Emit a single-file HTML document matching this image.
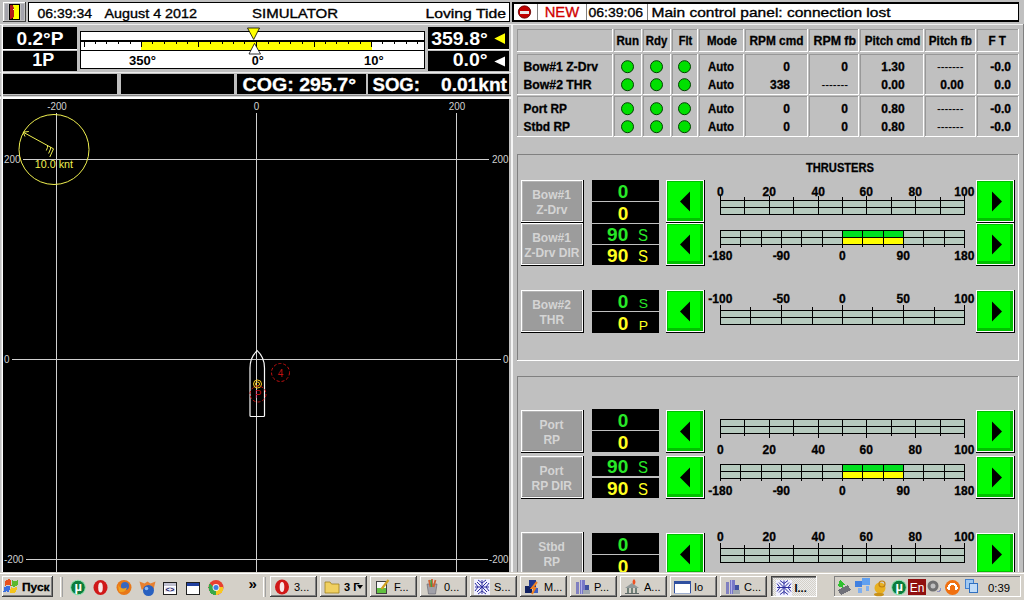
<!DOCTYPE html>
<html lang="en"><head><meta charset="utf-8"><title>DP Simulator - Loving Tide</title>
<style>
html,body{margin:0;padding:0;background:#c0c0c0;overflow:hidden}
svg{display:block;font-family:"Liberation Sans",sans-serif}
svg rect,svg line,svg polygon,svg path{shape-rendering:crispEdges}
svg .aa{shape-rendering:geometricPrecision}
text{white-space:pre}
.hv{stroke:#000;stroke-width:0.35px}
.hb{stroke:#000;stroke-width:0.3px}
.hw{stroke:#fff;stroke-width:0.3px}
</style></head><body>
<svg width="1024" height="600" viewBox="0 0 1024 600">
<rect x="0" y="0" width="1024" height="600" fill="#c0c0c0" />
<rect x="3" y="2" width="23" height="20" fill="#c0c0c0" />
<rect x="3" y="2" width="23" height="1" fill="#ffffff" />
<rect x="3" y="2" width="1" height="20" fill="#ffffff" />
<rect x="3" y="21" width="23" height="1" fill="#404040" />
<rect x="25" y="2" width="1" height="20" fill="#404040" />
<rect x="5" y="4" width="3" height="16" fill="#a4a4ac" />
<rect x="21" y="4" width="3" height="16" fill="#a4a4ac" />
<rect x="9" y="4" width="11" height="16" fill="#000000" />
<rect x="13" y="5" width="6" height="14" fill="#ffff00" />
<polygon class="aa" points="10,5 12.5,5 14,8 14,17 11,19 10,19" fill="#b01818"/>
<rect x="13" y="9" width="1" height="1" fill="#f0e0e0" />
<rect x="28" y="2" width="482" height="20" fill="#000000" />
<rect x="29" y="3" width="480" height="18" fill="#ffffff" />
<text x="37.5" y="17.6" font-size="13.5" fill="#000" textLength="54.5" lengthAdjust="spacingAndGlyphs" class="hv" >06:39:34</text>
<text x="104.5" y="17.6" font-size="13.5" fill="#000" textLength="92.5" lengthAdjust="spacingAndGlyphs" class="hv" >August 4 2012</text>
<text x="252" y="17.6" font-size="13.5" fill="#000" textLength="86" lengthAdjust="spacingAndGlyphs" class="hv" >SIMULATOR</text>
<text x="425.5" y="17.6" font-size="13.5" fill="#000" textLength="80.5" lengthAdjust="spacingAndGlyphs" class="hv" >Loving Tide</text>
<rect x="0" y="24" width="1024" height="1" fill="#f0f0f0" />
<rect x="3" y="27" width="74" height="22" fill="#000000" />
<rect x="3" y="51" width="74" height="20" fill="#000000" />
<rect x="3" y="49" width="74" height="1" fill="#ffffff" />
<rect x="428" y="49" width="81" height="1" fill="#ffffff" />
<rect x="0" y="72" width="511" height="1" fill="#ececec" />
<text x="40" y="45.3" font-size="19" font-weight="bold" fill="#ffffff" text-anchor="middle" textLength="47" lengthAdjust="spacingAndGlyphs" >0.2°P</text>
<text x="43.2" y="66.4" font-size="18" font-weight="bold" fill="#ffffff" text-anchor="middle" textLength="22" lengthAdjust="spacingAndGlyphs" >1P</text>
<rect x="428" y="27" width="81" height="22" fill="#000000" />
<rect x="428" y="51" width="81" height="20" fill="#000000" />
<text x="431.2" y="45.3" font-size="19" font-weight="bold" fill="#ffffff" textLength="56.6" lengthAdjust="spacingAndGlyphs" >359.8°</text>
<text x="452.7" y="66.4" font-size="18" font-weight="bold" fill="#ffffff" textLength="35" lengthAdjust="spacingAndGlyphs" >0.0°</text>
<polygon class="aa" points="494.3,38.6 505,33.2 505,44" fill="#ffff00"/>
<polygon class="aa" points="494.3,61.5 505,56.6 505,66.4" fill="#ffffff"/>
<rect x="80" y="31" width="345" height="38" fill="#000000" />
<rect x="81" y="32" width="343" height="18" fill="#ffffff" />
<rect x="81" y="51" width="343" height="17" fill="#ffffff" />
<rect x="141" y="42" width="231" height="8" fill="#ffff00" />
<rect x="81" y="40" width="343" height="2" fill="#000000" />
<rect x="84" y="41" width="1" height="6" fill="#000000" />
<rect x="95" y="41" width="1" height="3" fill="#000000" />
<rect x="106" y="41" width="1" height="3" fill="#000000" />
<rect x="118" y="41" width="1" height="3" fill="#000000" />
<rect x="130" y="41" width="1" height="3" fill="#000000" />
<rect x="141" y="41" width="1" height="6" fill="#000000" />
<rect x="152" y="41" width="1" height="3" fill="#000000" />
<rect x="164" y="41" width="1" height="3" fill="#000000" />
<rect x="176" y="41" width="1" height="3" fill="#000000" />
<rect x="187" y="41" width="1" height="3" fill="#000000" />
<rect x="198" y="41" width="1" height="6" fill="#000000" />
<rect x="210" y="41" width="1" height="3" fill="#000000" />
<rect x="222" y="41" width="1" height="3" fill="#000000" />
<rect x="233" y="41" width="1" height="3" fill="#000000" />
<rect x="244" y="41" width="1" height="3" fill="#000000" />
<rect x="256" y="41" width="1" height="6" fill="#000000" />
<rect x="268" y="41" width="1" height="3" fill="#000000" />
<rect x="279" y="41" width="1" height="3" fill="#000000" />
<rect x="290" y="41" width="1" height="3" fill="#000000" />
<rect x="302" y="41" width="1" height="3" fill="#000000" />
<rect x="314" y="41" width="1" height="6" fill="#000000" />
<rect x="325" y="41" width="1" height="3" fill="#000000" />
<rect x="336" y="41" width="1" height="3" fill="#000000" />
<rect x="348" y="41" width="1" height="3" fill="#000000" />
<rect x="360" y="41" width="1" height="3" fill="#000000" />
<rect x="371" y="41" width="1" height="6" fill="#000000" />
<rect x="382" y="41" width="1" height="3" fill="#000000" />
<rect x="394" y="41" width="1" height="3" fill="#000000" />
<rect x="406" y="41" width="1" height="3" fill="#000000" />
<rect x="417" y="41" width="1" height="3" fill="#000000" />
<text x="129" y="64.5" font-size="13" font-weight="bold" fill="#000000" textLength="27" lengthAdjust="spacingAndGlyphs" >350°</text>
<text x="251.8" y="64.5" font-size="13" font-weight="bold" fill="#000000" textLength="12" lengthAdjust="spacingAndGlyphs" >0°</text>
<text x="364" y="64.5" font-size="13" font-weight="bold" fill="#000000" textLength="19.6" lengthAdjust="spacingAndGlyphs" >10°</text>
<polygon class="aa" points="247.5,28 259.5,28 253.7,39.5" fill="#ffff00" stroke="#000" stroke-width="0.8"/>
<polygon class="aa" points="249,54 260.5,54 254.5,43.4" fill="#ffffff" stroke="#000" stroke-width="0.8"/>
<rect x="3" y="74" width="114" height="20" fill="#000000" />
<rect x="121" y="74" width="113" height="20" fill="#000000" />
<rect x="237" y="74" width="129" height="20" fill="#000000" />
<rect x="368" y="74" width="141" height="20" fill="#000000" />
<text x="242.6" y="90.8" font-size="19" font-weight="bold" fill="#ffffff" textLength="113.5" lengthAdjust="spacingAndGlyphs" class="hw" >COG: 295.7°</text>
<text x="372.5" y="90.8" font-size="19" font-weight="bold" fill="#ffffff" textLength="47.5" lengthAdjust="spacingAndGlyphs" class="hw" >SOG:</text>
<text x="441" y="90.8" font-size="19" font-weight="bold" fill="#ffffff" textLength="66" lengthAdjust="spacingAndGlyphs" class="hw" >0.01knt</text>
<rect x="0" y="95" width="511" height="1" fill="#888888" />
<rect x="0" y="96" width="511" height="1" fill="#d8d8d8" />
<rect x="0" y="97" width="511" height="2" fill="#ffffff" />
<rect x="1" y="25" width="1" height="547" fill="#d8d8d8" />
<rect x="2" y="25" width="1" height="547" fill="#ffffff" />
<rect x="3" y="99" width="506" height="473" fill="#000000" />
<rect x="511" y="24" width="1.5" height="548" fill="#f4f4f4" />
<rect x="56" y="113" width="1" height="459" fill="#d0d0d0" />
<rect x="256" y="113" width="1" height="459" fill="#d0d0d0" />
<rect x="456" y="113" width="1" height="459" fill="#d0d0d0" />
<rect x="23" y="159" width="466" height="1" fill="#d0d0d0" />
<rect x="12" y="359" width="489" height="1" fill="#d0d0d0" />
<rect x="26" y="559" width="462" height="1" fill="#d0d0d0" />
<text x="57" y="109.8" font-size="10.5" fill="#d0d0d0" text-anchor="middle" textLength="19.5" lengthAdjust="spacingAndGlyphs" >-200</text>
<text x="256.5" y="109.8" font-size="10.5" fill="#d0d0d0" text-anchor="middle" textLength="5.5" lengthAdjust="spacingAndGlyphs" >0</text>
<text x="457" y="109.8" font-size="10.5" fill="#d0d0d0" text-anchor="middle" textLength="16.5" lengthAdjust="spacingAndGlyphs" >200</text>
<text x="4" y="163.2" font-size="10.5" fill="#d0d0d0" textLength="16.5" lengthAdjust="spacingAndGlyphs" >200</text>
<text x="508.5" y="163.2" font-size="10.5" fill="#d0d0d0" text-anchor="end" textLength="16.5" lengthAdjust="spacingAndGlyphs" >200</text>
<text x="4" y="363.2" font-size="10.5" fill="#d0d0d0" textLength="5.5" lengthAdjust="spacingAndGlyphs" >0</text>
<text x="508.5" y="363.2" font-size="10.5" fill="#d0d0d0" text-anchor="end" textLength="5.5" lengthAdjust="spacingAndGlyphs" >0</text>
<text x="4" y="563.2" font-size="10.5" fill="#d0d0d0" textLength="19.5" lengthAdjust="spacingAndGlyphs" >-200</text>
<text x="508.5" y="563.2" font-size="10.5" fill="#d0d0d0" text-anchor="end" textLength="19.5" lengthAdjust="spacingAndGlyphs" >-200</text>
<circle class="aa" cx="54" cy="149.5" r="35" fill="none" stroke="#f0f050" stroke-width="1"/>
<path class="aa" d="M23.2 132.2 L53.5 148.8 M23.2 132.2 L28.8 131.5 M23.2 132.2 L25 136.5 M53.5 148.8 L49.8 157 M50.5 147.2 L50.5 149 L48.6 153.5 M47.5 145.6 L47.5 147.4 L46.3 150.5" fill="none" stroke="#f0f050" stroke-width="1"/>
<text x="34.8" y="167.5" font-size="10.5" fill="#f0f050" textLength="38.2" lengthAdjust="spacingAndGlyphs" >10.0 knt</text>
<path class="aa" d="M250 415.5 L250 368 C250 360 253 354.5 257.2 350.6 C261.5 354.5 264.5 360 264.5 368 L264.5 415.5 Q264.5 416.5 263.5 416.5 L251 416.5 Q250 416.5 250 415.5 Z" fill="none" stroke="#f8f8f8" stroke-width="1.2"/>
<circle class="aa" cx="257.5" cy="384" r="4" fill="none" stroke="#ffd020" stroke-width="1"/>
<circle class="aa" cx="257.5" cy="384" r="2" fill="none" stroke="#ffd020" stroke-width="1"/>
<circle class="aa" cx="258" cy="394" r="8" fill="none" stroke="#c01010" stroke-width="1" stroke-dasharray="3 2"/>
<text x="258" y="398" font-size="10" fill="#c01010" text-anchor="middle" >P</text>
<circle class="aa" cx="280.5" cy="372.5" r="9" fill="none" stroke="#c01010" stroke-width="1" stroke-dasharray="3 2"/>
<text x="280.5" y="376.5" font-size="10" fill="#c01010" text-anchor="middle" >4</text>
<rect x="512" y="2" width="507" height="20" fill="#000000" />
<rect x="514" y="4" width="504" height="16" fill="#ffffff" />
<rect x="537" y="4" width="1" height="16" fill="#808080" />
<rect x="586" y="4" width="1" height="16" fill="#808080" />
<rect x="647" y="4" width="1" height="16" fill="#808080" />
<circle class="aa" cx="524.5" cy="12" r="6.2" fill="#c00000" stroke="#600000" stroke-width="0.8"/>
<rect x="520" y="11" width="9" height="3" fill="#e8e8e8" />
<text x="544.7" y="16.6" font-size="14" fill="#d00000" textLength="34.5" lengthAdjust="spacingAndGlyphs" stroke="#d00000" stroke-width="0.3">NEW</text>
<text x="588.5" y="16.8" font-size="13.5" fill="#000" textLength="54.5" lengthAdjust="spacingAndGlyphs" class="hv" >06:39:06</text>
<text x="651.5" y="16.8" font-size="13.5" fill="#000" textLength="239" lengthAdjust="spacingAndGlyphs" class="hv" >Main control panel: connection lost</text>
<rect x="517" y="29" width="96" height="1" fill="#989898" />
<rect x="517" y="29" width="1" height="23" fill="#989898" />
<rect x="517" y="51" width="96" height="1" fill="#ffffff" />
<rect x="612" y="29" width="1" height="23" fill="#ffffff" />
<rect x="614" y="29" width="28" height="1" fill="#989898" />
<rect x="614" y="29" width="1" height="23" fill="#989898" />
<rect x="614" y="51" width="28" height="1" fill="#ffffff" />
<rect x="641" y="29" width="1" height="23" fill="#ffffff" />
<rect x="643" y="29" width="28" height="1" fill="#989898" />
<rect x="643" y="29" width="1" height="23" fill="#989898" />
<rect x="643" y="51" width="28" height="1" fill="#ffffff" />
<rect x="670" y="29" width="1" height="23" fill="#ffffff" />
<rect x="672" y="29" width="26" height="1" fill="#989898" />
<rect x="672" y="29" width="1" height="23" fill="#989898" />
<rect x="672" y="51" width="26" height="1" fill="#ffffff" />
<rect x="697" y="29" width="1" height="23" fill="#ffffff" />
<rect x="699" y="29" width="45" height="1" fill="#989898" />
<rect x="699" y="29" width="1" height="23" fill="#989898" />
<rect x="699" y="51" width="45" height="1" fill="#ffffff" />
<rect x="743" y="29" width="1" height="23" fill="#ffffff" />
<rect x="745" y="29" width="63" height="1" fill="#989898" />
<rect x="745" y="29" width="1" height="23" fill="#989898" />
<rect x="745" y="51" width="63" height="1" fill="#ffffff" />
<rect x="807" y="29" width="1" height="23" fill="#ffffff" />
<rect x="809" y="29" width="50" height="1" fill="#989898" />
<rect x="809" y="29" width="1" height="23" fill="#989898" />
<rect x="809" y="51" width="50" height="1" fill="#ffffff" />
<rect x="858" y="29" width="1" height="23" fill="#ffffff" />
<rect x="860" y="29" width="64" height="1" fill="#989898" />
<rect x="860" y="29" width="1" height="23" fill="#989898" />
<rect x="860" y="51" width="64" height="1" fill="#ffffff" />
<rect x="923" y="29" width="1" height="23" fill="#ffffff" />
<rect x="925" y="29" width="51" height="1" fill="#989898" />
<rect x="925" y="29" width="1" height="23" fill="#989898" />
<rect x="925" y="51" width="51" height="1" fill="#ffffff" />
<rect x="975" y="29" width="1" height="23" fill="#ffffff" />
<rect x="977" y="29" width="42" height="1" fill="#989898" />
<rect x="977" y="29" width="1" height="23" fill="#989898" />
<rect x="977" y="51" width="42" height="1" fill="#ffffff" />
<rect x="1018" y="29" width="1" height="23" fill="#ffffff" />
<rect x="517" y="54" width="96" height="1" fill="#989898" />
<rect x="517" y="54" width="1" height="41" fill="#989898" />
<rect x="517" y="94" width="96" height="1" fill="#ffffff" />
<rect x="612" y="54" width="1" height="41" fill="#ffffff" />
<rect x="614" y="54" width="28" height="1" fill="#989898" />
<rect x="614" y="54" width="1" height="41" fill="#989898" />
<rect x="614" y="94" width="28" height="1" fill="#ffffff" />
<rect x="641" y="54" width="1" height="41" fill="#ffffff" />
<rect x="643" y="54" width="28" height="1" fill="#989898" />
<rect x="643" y="54" width="1" height="41" fill="#989898" />
<rect x="643" y="94" width="28" height="1" fill="#ffffff" />
<rect x="670" y="54" width="1" height="41" fill="#ffffff" />
<rect x="672" y="54" width="26" height="1" fill="#989898" />
<rect x="672" y="54" width="1" height="41" fill="#989898" />
<rect x="672" y="94" width="26" height="1" fill="#ffffff" />
<rect x="697" y="54" width="1" height="41" fill="#ffffff" />
<rect x="699" y="54" width="45" height="1" fill="#989898" />
<rect x="699" y="54" width="1" height="41" fill="#989898" />
<rect x="699" y="94" width="45" height="1" fill="#ffffff" />
<rect x="743" y="54" width="1" height="41" fill="#ffffff" />
<rect x="745" y="54" width="63" height="1" fill="#989898" />
<rect x="745" y="54" width="1" height="41" fill="#989898" />
<rect x="745" y="94" width="63" height="1" fill="#ffffff" />
<rect x="807" y="54" width="1" height="41" fill="#ffffff" />
<rect x="809" y="54" width="50" height="1" fill="#989898" />
<rect x="809" y="54" width="1" height="41" fill="#989898" />
<rect x="809" y="94" width="50" height="1" fill="#ffffff" />
<rect x="858" y="54" width="1" height="41" fill="#ffffff" />
<rect x="860" y="54" width="64" height="1" fill="#989898" />
<rect x="860" y="54" width="1" height="41" fill="#989898" />
<rect x="860" y="94" width="64" height="1" fill="#ffffff" />
<rect x="923" y="54" width="1" height="41" fill="#ffffff" />
<rect x="925" y="54" width="51" height="1" fill="#989898" />
<rect x="925" y="54" width="1" height="41" fill="#989898" />
<rect x="925" y="94" width="51" height="1" fill="#ffffff" />
<rect x="975" y="54" width="1" height="41" fill="#ffffff" />
<rect x="977" y="54" width="42" height="1" fill="#989898" />
<rect x="977" y="54" width="1" height="41" fill="#989898" />
<rect x="977" y="94" width="42" height="1" fill="#ffffff" />
<rect x="1018" y="54" width="1" height="41" fill="#ffffff" />
<rect x="517" y="96" width="96" height="1" fill="#989898" />
<rect x="517" y="96" width="1" height="41" fill="#989898" />
<rect x="517" y="136" width="96" height="1" fill="#ffffff" />
<rect x="612" y="96" width="1" height="41" fill="#ffffff" />
<rect x="614" y="96" width="28" height="1" fill="#989898" />
<rect x="614" y="96" width="1" height="41" fill="#989898" />
<rect x="614" y="136" width="28" height="1" fill="#ffffff" />
<rect x="641" y="96" width="1" height="41" fill="#ffffff" />
<rect x="643" y="96" width="28" height="1" fill="#989898" />
<rect x="643" y="96" width="1" height="41" fill="#989898" />
<rect x="643" y="136" width="28" height="1" fill="#ffffff" />
<rect x="670" y="96" width="1" height="41" fill="#ffffff" />
<rect x="672" y="96" width="26" height="1" fill="#989898" />
<rect x="672" y="96" width="1" height="41" fill="#989898" />
<rect x="672" y="136" width="26" height="1" fill="#ffffff" />
<rect x="697" y="96" width="1" height="41" fill="#ffffff" />
<rect x="699" y="96" width="45" height="1" fill="#989898" />
<rect x="699" y="96" width="1" height="41" fill="#989898" />
<rect x="699" y="136" width="45" height="1" fill="#ffffff" />
<rect x="743" y="96" width="1" height="41" fill="#ffffff" />
<rect x="745" y="96" width="63" height="1" fill="#989898" />
<rect x="745" y="96" width="1" height="41" fill="#989898" />
<rect x="745" y="136" width="63" height="1" fill="#ffffff" />
<rect x="807" y="96" width="1" height="41" fill="#ffffff" />
<rect x="809" y="96" width="50" height="1" fill="#989898" />
<rect x="809" y="96" width="1" height="41" fill="#989898" />
<rect x="809" y="136" width="50" height="1" fill="#ffffff" />
<rect x="858" y="96" width="1" height="41" fill="#ffffff" />
<rect x="860" y="96" width="64" height="1" fill="#989898" />
<rect x="860" y="96" width="1" height="41" fill="#989898" />
<rect x="860" y="136" width="64" height="1" fill="#ffffff" />
<rect x="923" y="96" width="1" height="41" fill="#ffffff" />
<rect x="925" y="96" width="51" height="1" fill="#989898" />
<rect x="925" y="96" width="1" height="41" fill="#989898" />
<rect x="925" y="136" width="51" height="1" fill="#ffffff" />
<rect x="975" y="96" width="1" height="41" fill="#ffffff" />
<rect x="977" y="96" width="42" height="1" fill="#989898" />
<rect x="977" y="96" width="1" height="41" fill="#989898" />
<rect x="977" y="136" width="42" height="1" fill="#ffffff" />
<rect x="1018" y="96" width="1" height="41" fill="#ffffff" />
<text x="616.5" y="45" font-size="12" font-weight="bold" fill="#000000" textLength="22.5" lengthAdjust="spacingAndGlyphs" class="hb" >Run</text>
<text x="645.8" y="45" font-size="12" font-weight="bold" fill="#000000" textLength="21.5" lengthAdjust="spacingAndGlyphs" class="hb" >Rdy</text>
<text x="678.8" y="45" font-size="12" font-weight="bold" fill="#000000" textLength="13.5" lengthAdjust="spacingAndGlyphs" class="hb" >Flt</text>
<text x="707" y="45" font-size="12" font-weight="bold" fill="#000000" textLength="30" lengthAdjust="spacingAndGlyphs" class="hb" >Mode</text>
<text x="749.5" y="45" font-size="12" font-weight="bold" fill="#000000" textLength="54" lengthAdjust="spacingAndGlyphs" class="hb" >RPM cmd</text>
<text x="813.5" y="45" font-size="12" font-weight="bold" fill="#000000" textLength="42.5" lengthAdjust="spacingAndGlyphs" class="hb" >RPM fb</text>
<text x="864.8" y="45" font-size="12" font-weight="bold" fill="#000000" textLength="55.5" lengthAdjust="spacingAndGlyphs" class="hb" >Pitch cmd</text>
<text x="928.8" y="45" font-size="12" font-weight="bold" fill="#000000" textLength="43" lengthAdjust="spacingAndGlyphs" class="hb" >Pitch fb</text>
<text x="988.5" y="45" font-size="12" font-weight="bold" fill="#000000" textLength="17.5" lengthAdjust="spacingAndGlyphs" class="hb" >F T</text>
<text x="523.5" y="71" font-size="12" font-weight="bold" fill="#000000" textLength="74.5" lengthAdjust="spacingAndGlyphs" class="hb" >Bow#1 Z-Drv</text>
<circle class="aa" cx="627.5" cy="66.7" r="6" fill="#00e000" stroke="#004000" stroke-width="1"/>
<circle class="aa" cx="656.5" cy="66.7" r="6" fill="#00e000" stroke="#004000" stroke-width="1"/>
<circle class="aa" cx="684.5" cy="66.7" r="6" fill="#00e000" stroke="#004000" stroke-width="1"/>
<text x="708" y="71" font-size="12" font-weight="bold" fill="#000000" textLength="26" lengthAdjust="spacingAndGlyphs" class="hb" >Auto</text>
<text x="790" y="71" font-size="12" font-weight="bold" fill="#000000" text-anchor="end" class="hb" >0</text>
<text x="848" y="71" font-size="12" font-weight="bold" fill="#000000" text-anchor="end" class="hb" >0</text>
<text x="893" y="71" font-size="12" font-weight="bold" fill="#000000" text-anchor="middle" class="hb" >1.30</text>
<text x="950.2" y="71" font-size="12" fill="#000000" text-anchor="middle" textLength="26.5" lengthAdjust="spacingAndGlyphs" >-------</text>
<text x="1011" y="71" font-size="12" font-weight="bold" fill="#000000" text-anchor="end" class="hb" >-0.0</text>
<text x="523.5" y="89" font-size="12" font-weight="bold" fill="#000000" textLength="68" lengthAdjust="spacingAndGlyphs" class="hb" >Bow#2 THR</text>
<circle class="aa" cx="627.5" cy="84.7" r="6" fill="#00e000" stroke="#004000" stroke-width="1"/>
<circle class="aa" cx="656.5" cy="84.7" r="6" fill="#00e000" stroke="#004000" stroke-width="1"/>
<circle class="aa" cx="684.5" cy="84.7" r="6" fill="#00e000" stroke="#004000" stroke-width="1"/>
<text x="708" y="89" font-size="12" font-weight="bold" fill="#000000" textLength="26" lengthAdjust="spacingAndGlyphs" class="hb" >Auto</text>
<text x="790" y="89" font-size="12" font-weight="bold" fill="#000000" text-anchor="end" class="hb" >338</text>
<text x="848" y="89" font-size="12" fill="#000000" text-anchor="end" textLength="26.5" lengthAdjust="spacingAndGlyphs" >-------</text>
<text x="893" y="89" font-size="12" font-weight="bold" fill="#000000" text-anchor="middle" class="hb" >0.00</text>
<text x="952" y="89" font-size="12" font-weight="bold" fill="#000000" text-anchor="middle" class="hb" >0.00</text>
<text x="1011" y="89" font-size="12" font-weight="bold" fill="#000000" text-anchor="end" class="hb" >0.0</text>
<text x="523.5" y="113" font-size="12" font-weight="bold" fill="#000000" textLength="43.5" lengthAdjust="spacingAndGlyphs" class="hb" >Port RP</text>
<circle class="aa" cx="627.5" cy="108.7" r="6" fill="#00e000" stroke="#004000" stroke-width="1"/>
<circle class="aa" cx="656.5" cy="108.7" r="6" fill="#00e000" stroke="#004000" stroke-width="1"/>
<circle class="aa" cx="684.5" cy="108.7" r="6" fill="#00e000" stroke="#004000" stroke-width="1"/>
<text x="708" y="113" font-size="12" font-weight="bold" fill="#000000" textLength="26" lengthAdjust="spacingAndGlyphs" class="hb" >Auto</text>
<text x="790" y="113" font-size="12" font-weight="bold" fill="#000000" text-anchor="end" class="hb" >0</text>
<text x="848" y="113" font-size="12" font-weight="bold" fill="#000000" text-anchor="end" class="hb" >0</text>
<text x="893" y="113" font-size="12" font-weight="bold" fill="#000000" text-anchor="middle" class="hb" >0.80</text>
<text x="950.2" y="113" font-size="12" fill="#000000" text-anchor="middle" textLength="26.5" lengthAdjust="spacingAndGlyphs" >-------</text>
<text x="1011" y="113" font-size="12" font-weight="bold" fill="#000000" text-anchor="end" class="hb" >-0.0</text>
<text x="523.5" y="131" font-size="12" font-weight="bold" fill="#000000" textLength="46.5" lengthAdjust="spacingAndGlyphs" class="hb" >Stbd RP</text>
<circle class="aa" cx="627.5" cy="126.7" r="6" fill="#00e000" stroke="#004000" stroke-width="1"/>
<circle class="aa" cx="656.5" cy="126.7" r="6" fill="#00e000" stroke="#004000" stroke-width="1"/>
<circle class="aa" cx="684.5" cy="126.7" r="6" fill="#00e000" stroke="#004000" stroke-width="1"/>
<text x="708" y="131" font-size="12" font-weight="bold" fill="#000000" textLength="26" lengthAdjust="spacingAndGlyphs" class="hb" >Auto</text>
<text x="790" y="131" font-size="12" font-weight="bold" fill="#000000" text-anchor="end" class="hb" >0</text>
<text x="848" y="131" font-size="12" font-weight="bold" fill="#000000" text-anchor="end" class="hb" >0</text>
<text x="893" y="131" font-size="12" font-weight="bold" fill="#000000" text-anchor="middle" class="hb" >0.80</text>
<text x="950.2" y="131" font-size="12" fill="#000000" text-anchor="middle" textLength="26.5" lengthAdjust="spacingAndGlyphs" >-------</text>
<text x="1011" y="131" font-size="12" font-weight="bold" fill="#000000" text-anchor="end" class="hb" >-0.0</text>
<rect x="1023" y="24" width="1" height="548" fill="#808080" />
<rect x="517" y="154" width="502" height="1" fill="#808080" />
<rect x="517" y="154" width="1" height="206" fill="#808080" />
<rect x="1018" y="154" width="1" height="206" fill="#ffffff" />
<rect x="517" y="360" width="502" height="1" fill="#ffffff" />
<rect x="517" y="376" width="502" height="1" fill="#808080" />
<rect x="517" y="376" width="1" height="196" fill="#808080" />
<rect x="1018" y="376" width="1" height="196" fill="#ffffff" />
<text x="840" y="172" font-size="12" font-weight="bold" fill="#000000" text-anchor="middle" textLength="68" lengthAdjust="spacingAndGlyphs" class="hb" >THRUSTERS</text>
<rect x="521" y="180" width="63" height="43" fill="#000000" />
<rect x="521" y="180" width="62" height="42" fill="#ffffff" />
<rect x="522" y="181" width="60" height="40" fill="#8c8c8c" />
<rect x="522" y="181" width="59" height="39" fill="#b4b4b4" />
<rect x="523" y="182" width="58" height="38" fill="#9c9c9c" />
<text x="551.5" y="198.6" font-size="12" font-weight="bold" fill="#d4d4d4" text-anchor="middle" >Bow#1</text>
<text x="551.8" y="213.6" font-size="12" font-weight="bold" fill="#d4d4d4" text-anchor="middle" >Z-Drv</text>
<rect x="592" y="180" width="67" height="21" fill="#000000" />
<text x="628.3" y="198" font-size="19" font-weight="bold" fill="#28e828" text-anchor="end" textLength="10.6" lengthAdjust="spacingAndGlyphs" >0</text>
<rect x="592" y="202" width="67" height="21" fill="#000000" />
<text x="628.3" y="220" font-size="19" font-weight="bold" fill="#ffff20" text-anchor="end" textLength="10.6" lengthAdjust="spacingAndGlyphs" >0</text>
<rect x="666" y="180" width="39" height="43" fill="#000000" />
<rect x="666" y="180" width="38" height="42" fill="#ffffff" />
<rect x="667" y="181" width="36" height="40" fill="#00c000" />
<rect x="668" y="182" width="32" height="36" fill="#00fa00" />
<polygon class="aa" points="680,201.5 690,191.5 690,211.5" fill="#000"/>
<rect x="976" y="180" width="39" height="43" fill="#000000" />
<rect x="976" y="180" width="38" height="42" fill="#ffffff" />
<rect x="977" y="181" width="36" height="40" fill="#00c000" />
<rect x="978" y="182" width="32" height="36" fill="#00fa00" />
<polygon class="aa" points="1002,201.5 992,191.5 992,211.5" fill="#000"/>
<rect x="720" y="200" width="244" height="15" fill="#b6cabe" />
<rect x="720" y="200" width="245" height="1" fill="#000000" />
<rect x="720" y="207" width="245" height="1" fill="#000000" />
<rect x="720" y="214" width="245" height="1" fill="#000000" />
<rect x="720" y="196" width="1" height="19" fill="#000000" />
<text x="720.3" y="195.5" font-size="12" font-weight="bold" fill="#000000" text-anchor="middle" class="hb" >0</text>
<rect x="744" y="197" width="1" height="18" fill="#000000" />
<rect x="769" y="196" width="1" height="19" fill="#000000" />
<text x="769.3" y="195.5" font-size="12" font-weight="bold" fill="#000000" text-anchor="middle" class="hb" >20</text>
<rect x="793" y="197" width="1" height="18" fill="#000000" />
<rect x="818" y="196" width="1" height="19" fill="#000000" />
<text x="818.3" y="195.5" font-size="12" font-weight="bold" fill="#000000" text-anchor="middle" class="hb" >40</text>
<rect x="842" y="197" width="1" height="18" fill="#000000" />
<rect x="866" y="196" width="1" height="19" fill="#000000" />
<text x="866.3" y="195.5" font-size="12" font-weight="bold" fill="#000000" text-anchor="middle" class="hb" >60</text>
<rect x="891" y="197" width="1" height="18" fill="#000000" />
<rect x="915" y="196" width="1" height="19" fill="#000000" />
<text x="915.3" y="195.5" font-size="12" font-weight="bold" fill="#000000" text-anchor="middle" class="hb" >80</text>
<rect x="940" y="197" width="1" height="18" fill="#000000" />
<rect x="964" y="196" width="1" height="19" fill="#000000" />
<text x="964.3" y="195.5" font-size="12" font-weight="bold" fill="#000000" text-anchor="middle" class="hb" >100</text>
<rect x="521" y="223" width="63" height="43" fill="#000000" />
<rect x="521" y="223" width="62" height="42" fill="#ffffff" />
<rect x="522" y="224" width="60" height="40" fill="#8c8c8c" />
<rect x="522" y="224" width="59" height="39" fill="#b4b4b4" />
<rect x="523" y="225" width="58" height="38" fill="#9c9c9c" />
<text x="551.5" y="241.6" font-size="12" font-weight="bold" fill="#d4d4d4" text-anchor="middle" >Bow#1</text>
<text x="551.8" y="256.6" font-size="12" font-weight="bold" fill="#d4d4d4" text-anchor="middle" >Z-Drv DIR</text>
<rect x="592" y="224" width="67" height="20" fill="#000000" />
<text x="628.3" y="241" font-size="19" font-weight="bold" fill="#28e828" text-anchor="end" textLength="21.2" lengthAdjust="spacingAndGlyphs" >90</text>
<text x="638" y="241" font-size="16" fill="#28e828" textLength="10" lengthAdjust="spacingAndGlyphs" >S</text>
<rect x="592" y="245" width="67" height="20" fill="#000000" />
<text x="628.3" y="262" font-size="19" font-weight="bold" fill="#ffff20" text-anchor="end" textLength="21.2" lengthAdjust="spacingAndGlyphs" >90</text>
<text x="638" y="262" font-size="16" fill="#ffff20" textLength="10" lengthAdjust="spacingAndGlyphs" >S</text>
<rect x="666" y="223" width="39" height="43" fill="#000000" />
<rect x="666" y="223" width="38" height="42" fill="#ffffff" />
<rect x="667" y="224" width="36" height="40" fill="#00c000" />
<rect x="668" y="225" width="32" height="36" fill="#00fa00" />
<polygon class="aa" points="680,244.5 690,234.5 690,254.5" fill="#000"/>
<rect x="976" y="223" width="39" height="43" fill="#000000" />
<rect x="976" y="223" width="38" height="42" fill="#ffffff" />
<rect x="977" y="224" width="36" height="40" fill="#00c000" />
<rect x="978" y="225" width="32" height="36" fill="#00fa00" />
<polygon class="aa" points="1002,244.5 992,234.5 992,254.5" fill="#000"/>
<rect x="720" y="230" width="244" height="15" fill="#b6cabe" />
<rect x="842" y="230" width="61" height="7" fill="#00e020" />
<rect x="842" y="237" width="61" height="7" fill="#ffff00" />
<rect x="720" y="230" width="245" height="1" fill="#000000" />
<rect x="720" y="237" width="245" height="1" fill="#000000" />
<rect x="720" y="244" width="245" height="1" fill="#000000" />
<rect x="720" y="230" width="1" height="18" fill="#000000" />
<text x="720.3" y="260.4" font-size="12" font-weight="bold" fill="#000000" text-anchor="middle" class="hb" >-180</text>
<rect x="740" y="230" width="1" height="17" fill="#000000" />
<rect x="761" y="230" width="1" height="17" fill="#000000" />
<rect x="781" y="230" width="1" height="18" fill="#000000" />
<text x="781.3" y="260.4" font-size="12" font-weight="bold" fill="#000000" text-anchor="middle" class="hb" >-90</text>
<rect x="801" y="230" width="1" height="17" fill="#000000" />
<rect x="822" y="230" width="1" height="17" fill="#000000" />
<rect x="842" y="230" width="1" height="18" fill="#000000" />
<text x="842.3" y="260.4" font-size="12" font-weight="bold" fill="#000000" text-anchor="middle" class="hb" >0</text>
<rect x="862" y="230" width="1" height="17" fill="#000000" />
<rect x="883" y="230" width="1" height="17" fill="#000000" />
<rect x="903" y="230" width="1" height="18" fill="#000000" />
<text x="903.3" y="260.4" font-size="12" font-weight="bold" fill="#000000" text-anchor="middle" class="hb" >90</text>
<rect x="923" y="230" width="1" height="17" fill="#000000" />
<rect x="944" y="230" width="1" height="17" fill="#000000" />
<rect x="964" y="230" width="1" height="18" fill="#000000" />
<text x="964.3" y="260.4" font-size="12" font-weight="bold" fill="#000000" text-anchor="middle" class="hb" >180</text>
<rect x="521" y="290" width="63" height="43" fill="#000000" />
<rect x="521" y="290" width="62" height="42" fill="#ffffff" />
<rect x="522" y="291" width="60" height="40" fill="#8c8c8c" />
<rect x="522" y="291" width="59" height="39" fill="#b4b4b4" />
<rect x="523" y="292" width="58" height="38" fill="#9c9c9c" />
<text x="551.5" y="308.6" font-size="12" font-weight="bold" fill="#d4d4d4" text-anchor="middle" >Bow#2</text>
<text x="551.8" y="323.6" font-size="12" font-weight="bold" fill="#d4d4d4" text-anchor="middle" >THR</text>
<rect x="592" y="290" width="67" height="21" fill="#000000" />
<text x="628.3" y="308" font-size="19" font-weight="bold" fill="#28e828" text-anchor="end" textLength="10.6" lengthAdjust="spacingAndGlyphs" >0</text>
<text x="638.7" y="308.3" font-size="13.5" fill="#28e828" textLength="9.3" lengthAdjust="spacingAndGlyphs" >S</text>
<rect x="592" y="312" width="67" height="21" fill="#000000" />
<text x="628.3" y="330" font-size="19" font-weight="bold" fill="#ffff20" text-anchor="end" textLength="10.6" lengthAdjust="spacingAndGlyphs" >0</text>
<text x="638.7" y="330.3" font-size="13.5" fill="#ffff20" textLength="9.3" lengthAdjust="spacingAndGlyphs" >P</text>
<rect x="666" y="290" width="39" height="43" fill="#000000" />
<rect x="666" y="290" width="38" height="42" fill="#ffffff" />
<rect x="667" y="291" width="36" height="40" fill="#00c000" />
<rect x="668" y="292" width="32" height="36" fill="#00fa00" />
<polygon class="aa" points="680,311.5 690,301.5 690,321.5" fill="#000"/>
<rect x="976" y="290" width="39" height="43" fill="#000000" />
<rect x="976" y="290" width="38" height="42" fill="#ffffff" />
<rect x="977" y="291" width="36" height="40" fill="#00c000" />
<rect x="978" y="292" width="32" height="36" fill="#00fa00" />
<polygon class="aa" points="1002,311.5 992,301.5 992,321.5" fill="#000"/>
<rect x="720" y="310" width="244" height="15" fill="#b6cabe" />
<rect x="720" y="310" width="245" height="1" fill="#000000" />
<rect x="720" y="317" width="245" height="1" fill="#000000" />
<rect x="720" y="324" width="245" height="1" fill="#000000" />
<rect x="720" y="305" width="1" height="20" fill="#000000" />
<text x="720.3" y="302.5" font-size="12" font-weight="bold" fill="#000000" text-anchor="middle" class="hb" >-100</text>
<rect x="750" y="307" width="1" height="18" fill="#000000" />
<rect x="781" y="305" width="1" height="20" fill="#000000" />
<text x="781.3" y="302.5" font-size="12" font-weight="bold" fill="#000000" text-anchor="middle" class="hb" >-50</text>
<rect x="812" y="307" width="1" height="18" fill="#000000" />
<rect x="842" y="305" width="1" height="20" fill="#000000" />
<text x="842.3" y="302.5" font-size="12" font-weight="bold" fill="#000000" text-anchor="middle" class="hb" >0</text>
<rect x="872" y="307" width="1" height="18" fill="#000000" />
<rect x="903" y="305" width="1" height="20" fill="#000000" />
<text x="903.3" y="302.5" font-size="12" font-weight="bold" fill="#000000" text-anchor="middle" class="hb" >50</text>
<rect x="934" y="307" width="1" height="18" fill="#000000" />
<rect x="964" y="305" width="1" height="20" fill="#000000" />
<text x="964.3" y="302.5" font-size="12" font-weight="bold" fill="#000000" text-anchor="middle" class="hb" >100</text>
<rect x="521" y="410" width="63" height="43" fill="#000000" />
<rect x="521" y="410" width="62" height="42" fill="#ffffff" />
<rect x="522" y="411" width="60" height="40" fill="#8c8c8c" />
<rect x="522" y="411" width="59" height="39" fill="#b4b4b4" />
<rect x="523" y="412" width="58" height="38" fill="#9c9c9c" />
<text x="551.5" y="428.6" font-size="12" font-weight="bold" fill="#d4d4d4" text-anchor="middle" >Port</text>
<text x="551.8" y="443.6" font-size="12" font-weight="bold" fill="#d4d4d4" text-anchor="middle" >RP</text>
<rect x="592" y="409" width="67" height="21" fill="#000000" />
<text x="628.3" y="427" font-size="19" font-weight="bold" fill="#28e828" text-anchor="end" textLength="10.6" lengthAdjust="spacingAndGlyphs" >0</text>
<rect x="592" y="431" width="67" height="21" fill="#000000" />
<text x="628.3" y="449" font-size="19" font-weight="bold" fill="#ffff20" text-anchor="end" textLength="10.6" lengthAdjust="spacingAndGlyphs" >0</text>
<rect x="666" y="410" width="39" height="43" fill="#000000" />
<rect x="666" y="410" width="38" height="42" fill="#ffffff" />
<rect x="667" y="411" width="36" height="40" fill="#00c000" />
<rect x="668" y="412" width="32" height="36" fill="#00fa00" />
<polygon class="aa" points="680,431.5 690,421.5 690,441.5" fill="#000"/>
<rect x="976" y="410" width="39" height="43" fill="#000000" />
<rect x="976" y="410" width="38" height="42" fill="#ffffff" />
<rect x="977" y="411" width="36" height="40" fill="#00c000" />
<rect x="978" y="412" width="32" height="36" fill="#00fa00" />
<polygon class="aa" points="1002,431.5 992,421.5 992,441.5" fill="#000"/>
<rect x="720" y="419" width="244" height="15" fill="#b6cabe" />
<rect x="720" y="419" width="245" height="1" fill="#000000" />
<rect x="720" y="426" width="245" height="1" fill="#000000" />
<rect x="720" y="433" width="245" height="1" fill="#000000" />
<rect x="720" y="419" width="1" height="19" fill="#000000" />
<text x="720.3" y="453.5" font-size="12" font-weight="bold" fill="#000000" text-anchor="middle" class="hb" >0</text>
<rect x="744" y="419" width="1" height="17" fill="#000000" />
<rect x="769" y="419" width="1" height="19" fill="#000000" />
<text x="769.3" y="453.5" font-size="12" font-weight="bold" fill="#000000" text-anchor="middle" class="hb" >20</text>
<rect x="793" y="419" width="1" height="17" fill="#000000" />
<rect x="818" y="419" width="1" height="19" fill="#000000" />
<text x="818.3" y="453.5" font-size="12" font-weight="bold" fill="#000000" text-anchor="middle" class="hb" >40</text>
<rect x="842" y="419" width="1" height="17" fill="#000000" />
<rect x="866" y="419" width="1" height="19" fill="#000000" />
<text x="866.3" y="453.5" font-size="12" font-weight="bold" fill="#000000" text-anchor="middle" class="hb" >60</text>
<rect x="891" y="419" width="1" height="17" fill="#000000" />
<rect x="915" y="419" width="1" height="19" fill="#000000" />
<text x="915.3" y="453.5" font-size="12" font-weight="bold" fill="#000000" text-anchor="middle" class="hb" >80</text>
<rect x="940" y="419" width="1" height="17" fill="#000000" />
<rect x="964" y="419" width="1" height="19" fill="#000000" />
<text x="964.3" y="453.5" font-size="12" font-weight="bold" fill="#000000" text-anchor="middle" class="hb" >100</text>
<rect x="521" y="456" width="63" height="43" fill="#000000" />
<rect x="521" y="456" width="62" height="42" fill="#ffffff" />
<rect x="522" y="457" width="60" height="40" fill="#8c8c8c" />
<rect x="522" y="457" width="59" height="39" fill="#b4b4b4" />
<rect x="523" y="458" width="58" height="38" fill="#9c9c9c" />
<text x="551.5" y="474.6" font-size="12" font-weight="bold" fill="#d4d4d4" text-anchor="middle" >Port</text>
<text x="551.8" y="489.6" font-size="12" font-weight="bold" fill="#d4d4d4" text-anchor="middle" >RP DIR</text>
<rect x="592" y="456" width="67" height="20" fill="#000000" />
<text x="628.3" y="473" font-size="19" font-weight="bold" fill="#28e828" text-anchor="end" textLength="21.2" lengthAdjust="spacingAndGlyphs" >90</text>
<text x="638" y="473" font-size="16" fill="#28e828" textLength="10" lengthAdjust="spacingAndGlyphs" >S</text>
<rect x="592" y="478" width="67" height="20" fill="#000000" />
<text x="628.3" y="495" font-size="19" font-weight="bold" fill="#ffff20" text-anchor="end" textLength="21.2" lengthAdjust="spacingAndGlyphs" >90</text>
<text x="638" y="495" font-size="16" fill="#ffff20" textLength="10" lengthAdjust="spacingAndGlyphs" >S</text>
<rect x="666" y="456" width="39" height="43" fill="#000000" />
<rect x="666" y="456" width="38" height="42" fill="#ffffff" />
<rect x="667" y="457" width="36" height="40" fill="#00c000" />
<rect x="668" y="458" width="32" height="36" fill="#00fa00" />
<polygon class="aa" points="680,477.5 690,467.5 690,487.5" fill="#000"/>
<rect x="976" y="456" width="39" height="43" fill="#000000" />
<rect x="976" y="456" width="38" height="42" fill="#ffffff" />
<rect x="977" y="457" width="36" height="40" fill="#00c000" />
<rect x="978" y="458" width="32" height="36" fill="#00fa00" />
<polygon class="aa" points="1002,477.5 992,467.5 992,487.5" fill="#000"/>
<rect x="720" y="464" width="244" height="15" fill="#b6cabe" />
<rect x="842" y="464" width="61" height="7" fill="#00e020" />
<rect x="842" y="471" width="61" height="7" fill="#ffff00" />
<rect x="720" y="464" width="245" height="1" fill="#000000" />
<rect x="720" y="471" width="245" height="1" fill="#000000" />
<rect x="720" y="478" width="245" height="1" fill="#000000" />
<rect x="720" y="464" width="1" height="17" fill="#000000" />
<text x="720.3" y="494.5" font-size="12" font-weight="bold" fill="#000000" text-anchor="middle" class="hb" >-180</text>
<rect x="740" y="464" width="1" height="17" fill="#000000" />
<rect x="761" y="464" width="1" height="17" fill="#000000" />
<rect x="781" y="464" width="1" height="17" fill="#000000" />
<text x="781.3" y="494.5" font-size="12" font-weight="bold" fill="#000000" text-anchor="middle" class="hb" >-90</text>
<rect x="801" y="464" width="1" height="17" fill="#000000" />
<rect x="822" y="464" width="1" height="17" fill="#000000" />
<rect x="842" y="464" width="1" height="17" fill="#000000" />
<text x="842.3" y="494.5" font-size="12" font-weight="bold" fill="#000000" text-anchor="middle" class="hb" >0</text>
<rect x="862" y="464" width="1" height="17" fill="#000000" />
<rect x="883" y="464" width="1" height="17" fill="#000000" />
<rect x="903" y="464" width="1" height="17" fill="#000000" />
<text x="903.3" y="494.5" font-size="12" font-weight="bold" fill="#000000" text-anchor="middle" class="hb" >90</text>
<rect x="923" y="464" width="1" height="17" fill="#000000" />
<rect x="944" y="464" width="1" height="17" fill="#000000" />
<rect x="964" y="464" width="1" height="17" fill="#000000" />
<text x="964.3" y="494.5" font-size="12" font-weight="bold" fill="#000000" text-anchor="middle" class="hb" >180</text>
<rect x="521" y="532" width="63" height="43" fill="#000000" />
<rect x="521" y="532" width="62" height="42" fill="#ffffff" />
<rect x="522" y="533" width="60" height="40" fill="#8c8c8c" />
<rect x="522" y="533" width="59" height="39" fill="#b4b4b4" />
<rect x="523" y="534" width="58" height="38" fill="#9c9c9c" />
<text x="551.5" y="550.6" font-size="12" font-weight="bold" fill="#d4d4d4" text-anchor="middle" >Stbd</text>
<text x="551.8" y="565.6" font-size="12" font-weight="bold" fill="#d4d4d4" text-anchor="middle" >RP</text>
<rect x="592" y="533" width="67" height="21" fill="#000000" />
<text x="628.3" y="551" font-size="19" font-weight="bold" fill="#28e828" text-anchor="end" textLength="10.6" lengthAdjust="spacingAndGlyphs" >0</text>
<rect x="592" y="555" width="67" height="21" fill="#000000" />
<text x="628.3" y="573" font-size="19" font-weight="bold" fill="#ffff20" text-anchor="end" textLength="10.6" lengthAdjust="spacingAndGlyphs" >0</text>
<rect x="666" y="533" width="39" height="43" fill="#000000" />
<rect x="666" y="533" width="38" height="42" fill="#ffffff" />
<rect x="667" y="534" width="36" height="40" fill="#00c000" />
<rect x="668" y="535" width="32" height="36" fill="#00fa00" />
<polygon class="aa" points="680,554.5 690,544.5 690,564.5" fill="#000"/>
<rect x="976" y="533" width="39" height="43" fill="#000000" />
<rect x="976" y="533" width="38" height="42" fill="#ffffff" />
<rect x="977" y="534" width="36" height="40" fill="#00c000" />
<rect x="978" y="535" width="32" height="36" fill="#00fa00" />
<polygon class="aa" points="1002,554.5 992,544.5 992,564.5" fill="#000"/>
<rect x="720" y="548" width="244" height="15" fill="#b6cabe" />
<rect x="720" y="548" width="245" height="1" fill="#000000" />
<rect x="720" y="555" width="245" height="1" fill="#000000" />
<rect x="720" y="562" width="245" height="1" fill="#000000" />
<rect x="720" y="543" width="1" height="20" fill="#000000" />
<text x="720.3" y="540.5" font-size="12" font-weight="bold" fill="#000000" text-anchor="middle" class="hb" >0</text>
<rect x="744" y="545" width="1" height="18" fill="#000000" />
<rect x="769" y="543" width="1" height="20" fill="#000000" />
<text x="769.3" y="540.5" font-size="12" font-weight="bold" fill="#000000" text-anchor="middle" class="hb" >20</text>
<rect x="793" y="545" width="1" height="18" fill="#000000" />
<rect x="818" y="543" width="1" height="20" fill="#000000" />
<text x="818.3" y="540.5" font-size="12" font-weight="bold" fill="#000000" text-anchor="middle" class="hb" >40</text>
<rect x="842" y="545" width="1" height="18" fill="#000000" />
<rect x="866" y="543" width="1" height="20" fill="#000000" />
<text x="866.3" y="540.5" font-size="12" font-weight="bold" fill="#000000" text-anchor="middle" class="hb" >60</text>
<rect x="891" y="545" width="1" height="18" fill="#000000" />
<rect x="915" y="543" width="1" height="20" fill="#000000" />
<text x="915.3" y="540.5" font-size="12" font-weight="bold" fill="#000000" text-anchor="middle" class="hb" >80</text>
<rect x="940" y="545" width="1" height="18" fill="#000000" />
<rect x="964" y="543" width="1" height="20" fill="#000000" />
<text x="964.3" y="540.5" font-size="12" font-weight="bold" fill="#000000" text-anchor="middle" class="hb" >100</text>
<rect x="0" y="572" width="1024" height="28" fill="#d4d0c8" />
<rect x="0" y="572" width="1024" height="1" fill="#d4d0c8" />
<rect x="0" y="573" width="1024" height="1" fill="#ffffff" />
<rect x="2" y="576" width="51" height="21" fill="#d4d0c8" />
<rect x="2" y="576" width="51" height="1" fill="#ffffff" />
<rect x="2" y="576" width="1" height="21" fill="#ffffff" />
<rect x="2" y="596" width="51" height="1" fill="#404040" />
<rect x="52" y="576" width="1" height="21" fill="#404040" />
<rect x="3" y="595" width="49" height="1" fill="#808080" />
<rect x="51" y="577" width="1" height="19" fill="#808080" />
<text x="22" y="590.5" font-size="11.5" font-weight="bold" fill="#000000" textLength="27.6" lengthAdjust="spacingAndGlyphs" class="hb" >Пуск</text>
<g class="aa"><path d="M5.6 580.6 q3.2 -2.2 6 -0.6 l-1.1 5.6 q-2.8 -1.4 -6 0.6z" fill="#e8501c"/><path d="M12.4 580.3 q3 1.7 6.2 -0.4 l-1.2 5.8 q-3 1.9 -6.1 0.3z" fill="#5cb82c"/><path d="M4.3 587.2 q3.2 -2.2 6 -0.6 l-1.1 5.4 q-2.8 -1.4 -6 0.6z" fill="#3a6ee0"/><path d="M11 587 q3 1.7 6.2 -0.4 l-1.2 5.6 q-3 1.9 -6.1 0.3z" fill="#f4c41c"/></g>
<rect x="60" y="577" width="1" height="20" fill="#ffffff" />
<rect x="61" y="577" width="1" height="20" fill="#d4d0c8" />
<rect x="62" y="577" width="1" height="20" fill="#a0a0a0" />
<rect x="263" y="577" width="1" height="20" fill="#ffffff" />
<rect x="264" y="577" width="1" height="20" fill="#d4d0c8" />
<rect x="265" y="577" width="1" height="20" fill="#a0a0a0" />
<circle class="aa" cx="78" cy="587.5" r="7.3" fill="#0c7c3c" stroke="#90e8b0" stroke-width="1"/>
<text x="78.3" y="591.1" font-size="13" font-weight="bold" fill="#ffffff" text-anchor="middle" >µ</text>
<ellipse class="aa" cx="100.5" cy="587.5" rx="7" ry="7.5" fill="#d01818"/><ellipse class="aa" cx="100.5" cy="587.5" rx="2.3" ry="5" fill="#f8e8e8"/>
<circle class="aa" cx="124" cy="587.5" r="7.5" fill="#e87818"/><circle class="aa" cx="125" cy="586.0" r="4" fill="#3868c0"/><path class="aa" d="M118 584.5 q3 6 9 3 q-2 6 -8 4z" fill="#f0a020"/>
<path class="aa" d="M139.5 581.5 l5 2 l3 -2 l3 2 l5 -2 l-2 8 l-12 0z" fill="#e88030"/><circle class="aa" cx="148.5" cy="590.5" r="5.5" fill="#2860c0"/><circle class="aa" cx="146.5" cy="588.5" r="1.8" fill="#90b8f0"/>
<rect x="163" y="581.5" width="14" height="13" fill="#202020" />
<rect x="164" y="582.5" width="12" height="11" fill="#ffffff" />
<rect x="164" y="582.5" width="12" height="3" fill="#c0c0d0" />
<rect x="165" y="586.5" width="10" height="5" fill="#e8e8f4" />
<text x="170" y="592.0" font-size="7.5" font-weight="bold" fill="#101060" text-anchor="middle" >&lt;&gt;</text>
<rect x="185.5" y="581.5" width="14" height="13" fill="#202020" />
<rect x="186.5" y="582.5" width="12" height="11" fill="#ffffff" />
<rect x="186.5" y="582.5" width="12" height="3" fill="#2040a0" />
<g class="aa"><circle cx="216" cy="587.5" r="7.5" fill="#e84030"/><path d="M216 587.5 L209.5 583.8 A7.5 7.5 0 0 0 216.5 595.0z" fill="#38a848"/><path d="M216 587.5 L223.5 587.0 A7.5 7.5 0 0 1 216.5 595.0z" fill="#f8c820"/><circle cx="216" cy="587.5" r="3.4" fill="#f0f0f0"/><circle cx="216" cy="587.5" r="2.5" fill="#4080e0"/></g>
<text x="252.7" y="588.6" font-size="15" font-weight="bold" fill="#000000" text-anchor="middle" >»</text>
<rect x="270" y="576" width="47" height="21" fill="#d4d0c8" />
<rect x="270" y="576" width="47" height="1" fill="#ffffff" />
<rect x="270" y="576" width="1" height="21" fill="#ffffff" />
<rect x="270" y="596" width="47" height="1" fill="#404040" />
<rect x="316" y="576" width="1" height="21" fill="#404040" />
<rect x="271" y="595" width="45" height="1" fill="#808080" />
<rect x="315" y="577" width="1" height="19" fill="#808080" />
<ellipse class="aa" cx="282" cy="587" rx="7" ry="7.5" fill="#d01818"/><ellipse class="aa" cx="282" cy="587" rx="2.3" ry="5" fill="#f8e8e8"/>
<text x="294" y="591" font-size="11" fill="#000000" >3...</text>
<rect x="320" y="576" width="47" height="21" fill="#d4d0c8" />
<rect x="320" y="576" width="47" height="1" fill="#ffffff" />
<rect x="320" y="576" width="1" height="21" fill="#ffffff" />
<rect x="320" y="596" width="47" height="1" fill="#404040" />
<rect x="366" y="576" width="1" height="21" fill="#404040" />
<rect x="321" y="595" width="45" height="1" fill="#808080" />
<rect x="365" y="577" width="1" height="19" fill="#808080" />
<path class="aa" d="M325 582 l5 0 l1.5 2 l7.5 0 l0 9 l-14 0z" fill="#f0d060" stroke="#a08020" stroke-width="0.8"/>
<text x="344" y="591" font-size="11" font-weight="bold" fill="#000000" >3 Г</text>
<rect x="370" y="576" width="47" height="21" fill="#d4d0c8" />
<rect x="370" y="576" width="47" height="1" fill="#ffffff" />
<rect x="370" y="576" width="1" height="21" fill="#ffffff" />
<rect x="370" y="596" width="47" height="1" fill="#404040" />
<rect x="416" y="576" width="1" height="21" fill="#404040" />
<rect x="371" y="595" width="45" height="1" fill="#808080" />
<rect x="415" y="577" width="1" height="19" fill="#808080" />
<rect x="376" y="581" width="11" height="13" fill="#404040" />
<rect x="377" y="582" width="9" height="11" fill="#f8f8f8" />
<rect x="377" y="588" width="9" height="5" fill="#60c040" />
<path class="aa" d="M388.5 580 l-7 9" stroke="#d0a020" stroke-width="2.2"/>
<text x="394" y="591" font-size="11" fill="#000000" >F...</text>
<rect x="420" y="576" width="47" height="21" fill="#d4d0c8" />
<rect x="420" y="576" width="47" height="1" fill="#ffffff" />
<rect x="420" y="576" width="1" height="21" fill="#ffffff" />
<rect x="420" y="596" width="47" height="1" fill="#404040" />
<rect x="466" y="576" width="1" height="21" fill="#404040" />
<rect x="421" y="595" width="45" height="1" fill="#808080" />
<rect x="465" y="577" width="1" height="19" fill="#808080" />
<path class="aa" d="M427 584 l10 0 l-1.5 10 l-7 0z" fill="#a0a0a8" stroke="#606068" stroke-width="0.6"/><path class="aa" d="M429 580 l1.5 7 M432 579 l0 8 M435.5 580 l-2 7" stroke-width="1.8" stroke="#d06030"/><path class="aa" d="M431 580 l0.5 7" stroke="#40a040" stroke-width="1.5"/>
<text x="444" y="591" font-size="11" fill="#000000" >0...</text>
<rect x="470" y="576" width="47" height="21" fill="#d4d0c8" />
<rect x="470" y="576" width="47" height="1" fill="#ffffff" />
<rect x="470" y="576" width="1" height="21" fill="#ffffff" />
<rect x="470" y="596" width="47" height="1" fill="#404040" />
<rect x="516" y="576" width="1" height="21" fill="#404040" />
<rect x="471" y="595" width="45" height="1" fill="#808080" />
<rect x="515" y="577" width="1" height="19" fill="#808080" />
<rect x="474" y="579" width="16" height="16" fill="#f0f0ff" />
<path class="aa" d="M475 587 l14 0 M482 580 l0 14 M477 582 l10 10 M487 582 l-10 10 M478 580 l4 3 l4 -3 M478 594 l4 -3 l4 3 M475 583 l3 4 l-3 4 M489 583 l-3 4 l3 4" stroke="#3030a0" stroke-width="1" fill="none"/>
<text x="494" y="591" font-size="11" fill="#000000" >S...</text>
<rect x="520" y="576" width="47" height="21" fill="#d4d0c8" />
<rect x="520" y="576" width="47" height="1" fill="#ffffff" />
<rect x="520" y="576" width="1" height="21" fill="#ffffff" />
<rect x="520" y="596" width="47" height="1" fill="#404040" />
<rect x="566" y="576" width="1" height="21" fill="#404040" />
<rect x="521" y="595" width="45" height="1" fill="#808080" />
<rect x="565" y="577" width="1" height="19" fill="#808080" />
<rect x="525" y="586" width="7" height="7" fill="#102060" />
<rect x="529" y="580" width="7" height="7" fill="#203890" />
<rect x="533" y="588" width="5" height="5" fill="#4060c0" />
<path class="aa" d="M537 582 l-5 6 l3 0 l-3 6" stroke="#f08020" stroke-width="2" fill="none"/>
<text x="544" y="591" font-size="11" fill="#000000" >M...</text>
<rect x="570" y="576" width="47" height="21" fill="#d4d0c8" />
<rect x="570" y="576" width="47" height="1" fill="#ffffff" />
<rect x="570" y="576" width="1" height="21" fill="#ffffff" />
<rect x="570" y="596" width="47" height="1" fill="#404040" />
<rect x="616" y="576" width="1" height="21" fill="#404040" />
<rect x="571" y="595" width="45" height="1" fill="#808080" />
<rect x="615" y="577" width="1" height="19" fill="#808080" />
<rect x="576" y="582" width="3" height="12" fill="#8080c0" />
<rect x="580" y="580" width="5" height="14" fill="#7878c8" />
<rect x="581" y="580" width="1" height="14" fill="#b0b0e8" />
<rect x="585" y="585" width="4" height="9" fill="#4050a0" />
<rect x="583" y="590" width="7" height="4" fill="#a0a8b0" />
<text x="594" y="591" font-size="11" fill="#000000" >P...</text>
<rect x="620" y="576" width="47" height="21" fill="#d4d0c8" />
<rect x="620" y="576" width="47" height="1" fill="#ffffff" />
<rect x="620" y="576" width="1" height="21" fill="#ffffff" />
<rect x="620" y="596" width="47" height="1" fill="#404040" />
<rect x="666" y="576" width="1" height="21" fill="#404040" />
<rect x="621" y="595" width="45" height="1" fill="#808080" />
<rect x="665" y="577" width="1" height="19" fill="#808080" />
<path class="aa" d="M625 588 l7 -5 l7 5z" fill="#909898"/>
<rect x="627" y="588" width="2" height="6" fill="#708078" />
<rect x="631" y="588" width="2" height="6" fill="#708078" />
<rect x="635" y="588" width="2" height="6" fill="#708078" />
<rect x="625" y="593" width="14" height="1" fill="#606868" />
<path class="aa" d="M634 585 q-3 -3 0 -6 q3 3 0 6z" fill="#f05020"/>
<text x="644" y="591" font-size="11" fill="#000000" >A...</text>
<rect x="670" y="576" width="47" height="21" fill="#d4d0c8" />
<rect x="670" y="576" width="47" height="1" fill="#ffffff" />
<rect x="670" y="576" width="1" height="21" fill="#ffffff" />
<rect x="670" y="596" width="47" height="1" fill="#404040" />
<rect x="716" y="576" width="1" height="21" fill="#404040" />
<rect x="671" y="595" width="45" height="1" fill="#808080" />
<rect x="715" y="577" width="1" height="19" fill="#808080" />
<rect x="674" y="581" width="17" height="13" fill="#3050a0" />
<rect x="675" y="584" width="15" height="9" fill="#ffffff" />
<rect x="674" y="593" width="17" height="1" fill="#a0b0d0" />
<text x="694" y="591" font-size="11" fill="#000000" >Io</text>
<rect x="720" y="576" width="47" height="21" fill="#d4d0c8" />
<rect x="720" y="576" width="47" height="1" fill="#ffffff" />
<rect x="720" y="576" width="1" height="21" fill="#ffffff" />
<rect x="720" y="596" width="47" height="1" fill="#404040" />
<rect x="766" y="576" width="1" height="21" fill="#404040" />
<rect x="721" y="595" width="45" height="1" fill="#808080" />
<rect x="765" y="577" width="1" height="19" fill="#808080" />
<rect x="726" y="582" width="3" height="12" fill="#8080c0" />
<rect x="730" y="580" width="5" height="14" fill="#7878c8" />
<rect x="731" y="580" width="1" height="14" fill="#b0b0e8" />
<rect x="735" y="585" width="4" height="9" fill="#4050a0" />
<rect x="733" y="590" width="7" height="4" fill="#a0a8b0" />
<text x="744" y="591" font-size="11" fill="#000000" >C...</text>
<polygon class="aa" points="357,585 363,585 360,589" fill="#000"/>
<rect x="771" y="576" width="46" height="21" fill="#ececec" />
<pattern id="hatch" width="2" height="2" patternUnits="userSpaceOnUse"><rect width="1" height="1" fill="#d4d0c8"/><rect x="1" y="1" width="1" height="1" fill="#d4d0c8"/></pattern>
<rect x="771" y="576" width="46" height="21" fill="url(#hatch)" />
<rect x="771" y="576" width="46" height="1" fill="#404040" />
<rect x="771" y="576" width="1" height="21" fill="#404040" />
<rect x="772" y="577" width="44" height="1" fill="#808080" />
<rect x="772" y="577" width="1" height="19" fill="#808080" />
<rect x="771" y="596" width="46" height="1" fill="#ffffff" />
<rect x="816" y="576" width="1" height="21" fill="#ffffff" />
<rect x="776" y="579.5" width="16" height="16" fill="#f0f0ff" />
<path class="aa" d="M777 587.5 l14 0 M784 580.5 l0 14 M779 582.5 l10 10 M789 582.5 l-10 10 M780 580.5 l4 3 l4 -3 M780 594.5 l4 -3 l4 3 M777 583.5 l3 4 l-3 4 M791 583.5 l-3 4 l3 4" stroke="#3030a0" stroke-width="1" fill="none"/>
<text x="794.5" y="592" font-size="11" font-weight="bold" fill="#000000" >I...</text>
<rect x="834" y="576" width="187" height="1" fill="#808080" />
<rect x="834" y="576" width="1" height="21" fill="#808080" />
<rect x="834" y="596" width="187" height="1" fill="#ffffff" />
<rect x="1020" y="576" width="1" height="21" fill="#ffffff" />
<g class="aa"><path d="M838 590 l10 -5 l3 5 l-10 5z" fill="#707078"/><path d="M840 580 l5 5 l-2 0 l0 3 l-5 -2z" fill="#30c030"/></g>
<rect x="855" y="581" width="7" height="6" fill="#4080e0" />
<rect x="862" y="578" width="8" height="7" fill="#60a0f0" />
<rect x="858" y="588" width="4" height="5" fill="#80b0f0" />
<rect x="866" y="586" width="3" height="5" fill="#80b0f0" />
<g class="aa"><circle cx="880" cy="588" r="5.5" fill="#e8b020"/><circle cx="882" cy="584" r="3" fill="none" stroke="#c08010" stroke-width="1.2"/><ellipse cx="879" cy="594.5" rx="5" ry="1.8" fill="#c89018"/></g>
<circle class="aa" cx="899" cy="587.5" r="7.3" fill="#0c7c3c" stroke="#90e8b0" stroke-width="1"/>
<text x="899.3" y="591.1" font-size="13" font-weight="bold" fill="#ffffff" text-anchor="middle" >µ</text>
<rect x="908" y="579" width="18" height="16" fill="#901010" />
<text x="917" y="591.5" font-size="12" fill="#ffffff" text-anchor="middle" >En</text>
<g class="aa"><circle cx="933" cy="586" r="5.5" fill="#707070"/><circle cx="933" cy="586" r="2.5" fill="#c0c0c0"/><path d="M937 591 q4 1 4 -3" stroke="#9090c0" fill="none"/></g>
<g class="aa"><circle cx="952.5" cy="587.5" r="7.5" fill="#f07010"/><path d="M949 590 a4 4 0 1 1 7 0" stroke="#fff" stroke-width="2.4" fill="none"/></g>
<rect x="965" y="579" width="9" height="10" fill="#4080d0" />
<rect x="966" y="580" width="7" height="8" fill="#a0c8f0" />
<rect x="969" y="583" width="9" height="10" fill="#3070c0" />
<rect x="970" y="584" width="7" height="8" fill="#c0dcf8" />
<text x="988" y="591.5" font-size="11" fill="#000000" textLength="22" lengthAdjust="spacingAndGlyphs" >0:39</text>
</svg>
</body></html>
